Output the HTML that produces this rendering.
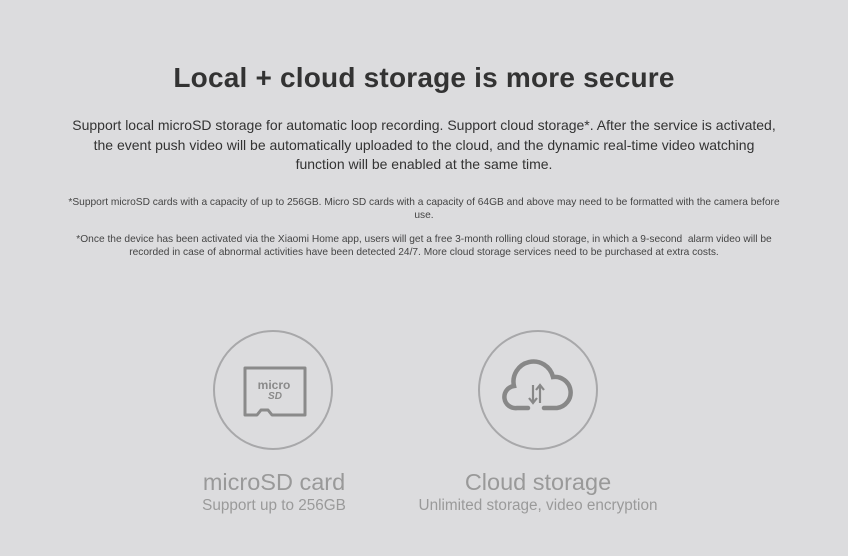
<!DOCTYPE html>
<html><head><meta charset="utf-8"><style>
html,body{margin:0;padding:0}
body{width:848px;height:556px;background:#dcdcde;font-family:"Liberation Sans",sans-serif;position:relative;overflow:hidden}
.t{position:absolute;left:0;width:848px;text-align:center}
h1{position:absolute;left:0;width:848px;text-align:center;margin:0;top:62px;font-size:28px;font-weight:bold;color:#333;letter-spacing:0.2px}
.b{font-size:14px;color:#333;line-height:19.5px;top:116px}
.s{font-size:10.2px;color:#444;line-height:12.5px}
.c{position:absolute;width:120px;height:120px;border:2px solid #a8a8aa;border-radius:50%;box-sizing:border-box}
.l{position:absolute;width:300px;text-align:center;color:#999}
.l1{font-size:23.5px;top:469px}
.l2{font-size:15.3px;top:497px;color:#9a9a9a}
</style></head><body>
<h1>Local + cloud storage is more secure</h1>
<div class="t b">Support local microSD storage for automatic loop recording. Support cloud storage*. After the service is activated,<br>the event push video will be automatically uploaded to the cloud, and the dynamic real-time video watching<br>function will be enabled at the same time.</div>
<div class="t s" style="top:197px">*Support microSD cards with a capacity of up to 256GB. Micro SD cards with a capacity of 64GB and above may need to be formatted with the camera before<br>use.</div>
<div class="t s" style="top:234px">*Once the device has been activated via the Xiaomi Home app, users will get a free 3-month rolling cloud storage, in which a 9-second &nbsp;alarm video will be<br>recorded in case of abnormal activities have been detected 24/7. More cloud storage services need to be purchased at extra costs.</div>
<div class="c" style="left:213px;top:330px"></div>
<div class="c" style="left:478px;top:330px"></div>
<svg style="position:absolute;left:0;top:0" width="848" height="556">
<path d="M245,368 H305 V415 H272 L268,410 H261 L257,415 H245 Z" fill="none" stroke="#8a8a8a" stroke-width="3" stroke-linejoin="round"/>
<text x="274" y="389" font-family="Liberation Sans" font-weight="bold" font-size="12" fill="#8a8a8a" text-anchor="middle">micro</text>
<text x="275" y="399" font-family="Liberation Sans" font-weight="bold" font-style="italic" font-size="10" fill="#8a8a8a" text-anchor="middle">SD</text>
<path d="M528,408 H517 A11,11 0 0 1 514,386 A20,20 0 0 1 553,377 A15,15 0 0 1 557,408 H544" fill="none" stroke="#888" stroke-width="4.5" stroke-linecap="round"/>
<path d="M533,385 V402 M529,398 L533,403 L537,398 M540,403 V386 M536,390 L540,385 L544,390" fill="none" stroke="#888" stroke-width="2.2"/>
</svg>
<div class="l l1" style="left:124px">microSD card</div>
<div class="l l2" style="left:124px">Support up to 256GB</div>
<div class="l l1" style="left:388px">Cloud storage</div>
<div class="l l2" style="left:388px">Unlimited storage, video encryption</div>
</body></html>
